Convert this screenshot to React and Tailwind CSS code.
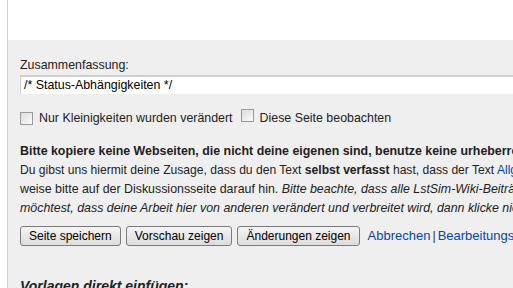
import React from "react";

const Checkbox = () => (
  <span className="inline-block w-[13px] h-[13px] border border-[#9a9a9a] bg-gradient-to-br from-[#dcdcdc] to-[#fbfbfb] shrink-0" />
);

const Button = ({ children }) => (
  <button className="h-[20px] px-[8px] rounded-[3px] border border-[#7a7a7a] bg-gradient-to-b from-[#f4f4f4] to-[#dcdcdc] text-[12px] leading-[18px] text-black whitespace-nowrap">
    {children}
  </button>
);

export default function App() {
  return (
    <div
      className="w-[513px] h-[288px] overflow-hidden bg-white flex"
      style={{ fontFamily: '"Liberation Sans", Arial, sans-serif' }}
    >
      <div className="w-[7px] shrink-0" />
      <div className="flex-1 border-l border-[#cccccc] flex flex-col min-w-0">
        <div className="h-[40px] shrink-0 bg-white" />
        <div className="flex-1 bg-[#efefef] pl-[12px] pt-[17px] text-[12.4px] text-[#222] whitespace-nowrap overflow-hidden">
          <div className="leading-[16px] h-[18px]">Zusammenfassung:</div>
          <div className="h-[19px] bg-white border-t-2 border-[#cfcfcf] border-l border-l-[#cfcfcf] pl-[3px] leading-[16px] text-black">
            /* Status-Abhängigkeiten */
          </div>
          <div className="flex items-center mt-[15px] h-[18px]">
            <Checkbox />
            <span className="ml-[6px]">Nur Kleinigkeiten wurden verändert</span>
            <span className="ml-[8px]"><Checkbox /></span>
            <span className="ml-[6px]">Diese Seite beobachten</span>
          </div>
          <div className="mt-[15px] leading-[19px] text-[#222]">
            <div className="font-bold">
              Bitte kopiere keine Webseiten, die nicht deine eigenen sind, benutze keine urheberrechtlich geschützten Werke ohne Erlaubnis des Copyright-Inhabers!
            </div>
            <div className="text-[12.1px]">
              Du gibst uns hiermit deine Zusage, dass du den Text <b>selbst verfasst</b> hast, dass der Text{" "}
              <a className="text-[#0645ad]">Allgemeingut</a> ist
            </div>
            <div>
              weise bitte auf der Diskussionsseite darauf hin.{" "}
              <i>Bitte beachte, dass alle LstSim-Wiki-Beiträge automatisch unter der Lizenz stehen.</i>
            </div>
            <div className="italic">
              möchtest, dass deine Arbeit hier von anderen verändert und verbreitet wird, dann klicke nicht auf „Seite speichern“.
            </div>
          </div>
          <div className="flex items-center mt-[8px] gap-[5px]">
            <Button>Seite speichern</Button>
            <Button>Vorschau zeigen</Button>
            <Button>Änderungen zeigen</Button>
            <span className="ml-[3px] text-[13px] text-[#0645ad]">Abbrechen</span>
            <span className="-ml-[3px] text-[#333]">|</span>
            <span className="-ml-[3px] text-[13px] text-[#0645ad]">Bearbeitungshilfe</span>
          </div>
          <div className="mt-[30px] italic font-semibold text-[14px]">Vorlagen direkt einfügen:</div>
        </div>
      </div>
    </div>
  );
}
